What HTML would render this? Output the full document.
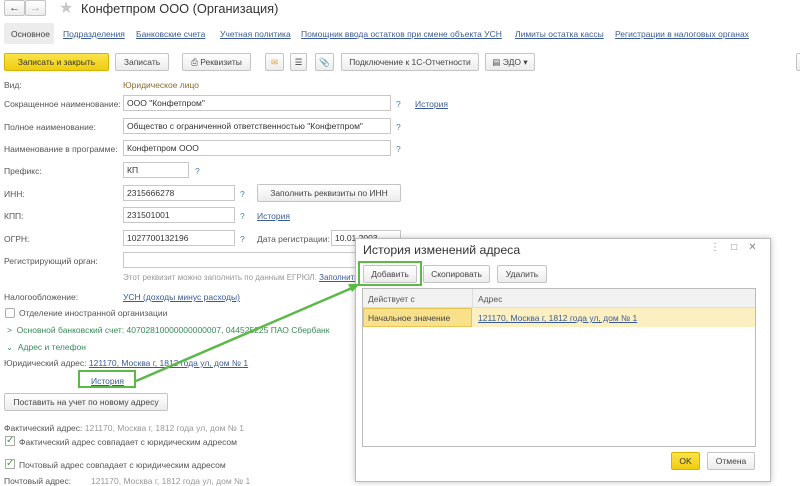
<!DOCTYPE html>
<html><head><meta charset="utf-8"><style>
*{margin:0;padding:0;box-sizing:border-box}
body{width:800px;height:486px;overflow:hidden;background:#fff;font-family:"Liberation Sans",sans-serif;font-size:8.5px;color:#4a4a4a;position:relative}
.a{position:absolute;white-space:nowrap}
.l{color:#555}
.lk{color:#3b5c93;text-decoration:underline}
.f{position:absolute;border:1px solid #c8c8c8;background:#fff;height:16px;padding:2px 3px;color:#333;font-size:8.5px;white-space:nowrap;overflow:hidden}
.b{position:absolute;border:1px solid #c4c4c4;border-radius:2px;background:linear-gradient(#fff,#ececec);height:18px;text-align:center;line-height:16px;color:#444;white-space:nowrap}
.q{color:#4a79b0}
.g{color:#3a8a5a}
.cb{position:absolute;width:10px;height:10px;border:1px solid #aaa;border-radius:2px;background:#fff}
</style></head><body>
<div class="b" style="left:4px;top:0;width:21px;height:16px;line-height:14px;font-size:11px">&#8592;</div>
<div class="b" style="left:25px;top:0;width:21px;height:16px;line-height:14px;font-size:11px;color:#aaa">&#8594;</div>
<div class="a" style="left:59px;top:-2px;font-size:16px;color:#c8c8c8">&#9733;</div>
<div class="a" style="left:81px;top:1px;font-size:12.8px;color:#333">Конфетпром ООО (Организация)</div>

<div class="a" style="left:4px;top:23px;width:50px;height:21px;background:#ececec;border-radius:2px"></div>
<div class="a" style="left:11px;top:29px;color:#444">Основное</div>
<div class="a lk" style="left:63px;top:29px">Подразделения</div>
<div class="a lk" style="left:136px;top:29px">Банковские счета</div>
<div class="a lk" style="left:220px;top:29px">Учетная политика</div>
<div class="a lk" style="left:301px;top:29px">Помощник ввода остатков при смене объекта УСН</div>
<div class="a lk" style="left:515px;top:29px">Лимиты остатка кассы</div>
<div class="a lk" style="left:615px;top:29px">Регистрации в налоговых органах</div>

<div class="b" style="left:4px;top:53px;width:105px;background:linear-gradient(#fbe44a,#f0cc10);border-color:#d4b400;color:#333">Записать и закрыть</div>
<div class="b" style="left:115px;top:53px;width:54px">Записать</div>
<div class="b" style="left:182px;top:53px;width:69px">&#9113; Реквизиты</div>
<div class="b" style="left:265px;top:53px;width:19px;color:#e0a030">&#9993;</div>
<div class="b" style="left:290px;top:53px;width:17px">&#9776;</div>
<div class="b" style="left:315px;top:53px;width:19px">&#128206;</div>
<div class="b" style="left:341px;top:53px;width:138px">Подключение к 1С-Отчетности</div>
<div class="b" style="left:485px;top:53px;width:50px">&#9636; ЭДО &#9662;</div>
<div class="b" style="left:796px;top:53px;width:10px"></div>

<div class="a l" style="left:4px;top:80px">Вид:</div>
<div class="a" style="left:123px;top:80px;color:#8a6a2a">Юридическое лицо</div>
<div class="a l" style="left:4px;top:99px">Сокращенное наименование:</div>
<div class="f" style="left:123px;top:95px;width:268px">ООО "Конфетпром"</div>
<div class="a q" style="left:396px;top:99px">?</div>
<div class="a lk" style="left:415px;top:99px">История</div>
<div class="a l" style="left:4px;top:122px">Полное наименование:</div>
<div class="f" style="left:123px;top:118px;width:268px">Общество с ограниченной ответственностью "Конфетпром"</div>
<div class="a q" style="left:396px;top:122px">?</div>
<div class="a l" style="left:4px;top:144px">Наименование в программе:</div>
<div class="f" style="left:123px;top:140px;width:268px">Конфетпром ООО</div>
<div class="a q" style="left:396px;top:144px">?</div>
<div class="a l" style="left:4px;top:166px">Префикс:</div>
<div class="f" style="left:123px;top:162px;width:66px">КП</div>
<div class="a q" style="left:195px;top:166px">?</div>
<div class="a l" style="left:4px;top:189px">ИНН:</div>
<div class="f" style="left:123px;top:185px;width:112px">2315666278</div>
<div class="a q" style="left:240px;top:189px">?</div>
<div class="b" style="left:257px;top:184px;width:144px">Заполнить реквизиты по ИНН</div>
<div class="a l" style="left:4px;top:211px">КПП:</div>
<div class="f" style="left:123px;top:207px;width:112px">231501001</div>
<div class="a q" style="left:240px;top:211px">?</div>
<div class="a lk" style="left:257px;top:211px">История</div>
<div class="a l" style="left:4px;top:234px">ОГРН:</div>
<div class="f" style="left:123px;top:230px;width:112px">1027700132196</div>
<div class="a q" style="left:240px;top:234px">?</div>
<div class="a l" style="left:257px;top:234px">Дата регистрации:</div>
<div class="f" style="left:331px;top:230px;width:70px">10.01.2003</div>
<div class="a l" style="left:4px;top:256px">Регистрирующий орган:</div>
<div class="f" style="left:123px;top:252px;width:250px"></div>
<div class="a" style="left:123px;top:273px;color:#999;font-size:8px">Этот реквизит можно заполнить по данным ЕГРЮЛ. <span class="lk">Заполнить</span></div>
<div class="a l" style="left:4px;top:292px">Налогообложение:</div>
<div class="a lk" style="left:123px;top:292px">УСН (доходы минус расходы)</div>
<div class="cb" style="left:5px;top:308px"></div>
<div class="a l" style="left:19px;top:308px">Отделение иностранной организации</div>
<div class="a g" style="left:7px;top:325px">&gt;&nbsp; Основной банковский счет: 40702810000000000007, 044525225 ПАО Сбербанк</div>
<div class="a g" style="left:6px;top:342px">&#8964;&nbsp; Адрес и телефон</div>
<div class="a l" style="left:4px;top:358px">Юридический адрес: <span class="lk">121170, Москва г, 1812 года ул, дом № 1</span></div>
<div class="a" style="left:78px;top:370px;width:58px;height:18px;border:2px solid #5cb847"></div>
<div class="a lk" style="left:91px;top:376px">История</div>
<div class="b" style="left:4px;top:393px;width:164px">Поставить на учет по новому адресу</div>
<div class="a l" style="left:4px;top:423px">Фактический адрес: <span style="color:#999">121170, Москва г, 1812 года ул, дом № 1</span></div>
<div class="a" style="left:5px;top:436px;color:#4a9a3a;font-size:10px;border:1px solid #aaa;width:10px;height:10px;line-height:8px;text-align:center">&#10003;</div>
<div class="a l" style="left:19px;top:437px">Фактический адрес совпадает с юридическим адресом</div>
<div class="a" style="left:5px;top:459px;color:#4a9a3a;font-size:10px;border:1px solid #aaa;width:10px;height:10px;line-height:8px;text-align:center">&#10003;</div>
<div class="a l" style="left:19px;top:460px">Почтовый адрес совпадает с юридическим адресом</div>
<div class="a l" style="left:4px;top:476px">Почтовый адрес:</div>
<div class="a" style="left:91px;top:476px;color:#999">121170, Москва г, 1812 года ул, дом № 1</div>

<!-- dialog -->
<div class="a" style="left:355px;top:238px;width:416px;height:244px;background:#fff;border:1px solid #bbb;box-shadow:0 0 6px rgba(0,0,0,.25)"></div>
<div class="a" style="left:363px;top:243px;font-size:12.3px;color:#333">История изменений адреса</div>
<div class="a" style="left:710px;top:242px;font-size:10px;color:#888">&#8942;&nbsp;&nbsp;&nbsp;&nbsp;&#9633;&nbsp;&nbsp;&nbsp;&nbsp;&#10005;</div>
<div class="b" style="left:363px;top:265px;width:54px">Добавить</div>
<div class="a" style="left:358px;top:261px;width:64px;height:25px;border:2px solid #5cb847"></div>
<div class="b" style="left:423px;top:265px;width:67px">Скопировать</div>
<div class="b" style="left:497px;top:265px;width:50px">Удалить</div>
<div class="a" style="left:362px;top:288px;width:394px;height:159px;border:1px solid #bbb"></div>
<div class="a" style="left:363px;top:289px;width:392px;height:19px;background:#f2f2f2;border-bottom:1px solid #ddd"></div>
<div class="a" style="left:472px;top:289px;width:1px;height:19px;background:#ddd"></div>
<div class="a l" style="left:368px;top:294px">Действует с</div>
<div class="a l" style="left:478px;top:294px">Адрес</div>
<div class="a" style="left:363px;top:308px;width:392px;height:19px;background:#fcf0c2"></div>
<div class="a" style="left:363px;top:308px;width:109px;height:19px;background:#f9e08a;border:1px solid #e8c450"></div>
<div class="a" style="left:368px;top:313px;color:#444">Начальное значение</div>
<div class="a lk" style="left:478px;top:313px">121170, Москва г, 1812 года ул, дом № 1</div>
<div class="b" style="left:671px;top:452px;width:29px;background:linear-gradient(#fbe44a,#f0cc10);border-color:#d4b400;color:#333">OK</div>
<div class="b" style="left:707px;top:452px;width:48px">Отмена</div>

<svg class="a" style="left:0;top:0" width="800" height="486"><line x1="136" y1="381" x2="352" y2="288" stroke="#5cb847" stroke-width="2.5"/><polygon points="360,284 348,284 352,292" fill="#5cb847"/></svg>
</body></html>
